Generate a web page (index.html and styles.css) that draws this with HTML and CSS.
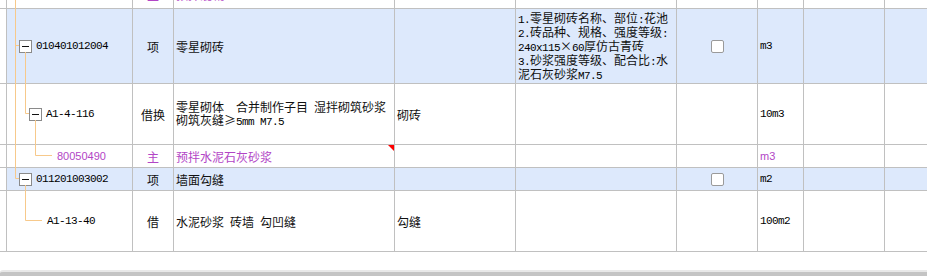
FILE: index.html
```html
<!DOCTYPE html>
<html lang="zh-CN">
<head>
  <meta charset="UTF-8">
  <title>清单定额</title>
  <link rel="stylesheet" href="styles.css">
</head>
<body>
  <div class="sheet">
    <div class="row short cut">
      <div class="cell edge"></div>
      <div class="cell tree leaf3"><span class="sans main">80050489</span></div>
      <div class="cell kind main">主</div>
      <div class="cell main">预拌混凝土</div>
      <div class="cell"></div>
      <div class="cell"></div>
      <div class="cell"></div>
      <div class="cell"><span class="sans main">m3</span></div>
      <div class="cell"></div>
      <div class="cell last"></div>
    </div>

    <div class="row tall hl">
      <div class="cell edge"></div>
      <div class="cell tree"><span class="tog"></span><span class="en code">010401012004</span></div>
      <div class="cell kind">项</div>
      <div class="cell">零星砌砖</div>
      <div class="cell"></div>
      <div class="cell">
        <div class="lines">
          <div><span class="en">1.</span>零星砌砖名称、部位<span class="en">:</span>花池</div>
          <div><span class="en">2.</span>砖品种、规格、强度等级<span class="en">:</span></div>
          <div><span class="en">240x115</span>×<span class="en">60</span>厚仿古青砖</div>
          <div><span class="en">3.</span>砂浆强度等级、配合比<span class="en">:</span>水</div>
          <div>泥石灰砂浆<span class="en">M7.5</span></div>
        </div>
      </div>
      <div class="cell pick"><span class="check"></span></div>
      <div class="cell"><span class="en">m3</span></div>
      <div class="cell"></div>
      <div class="cell last"></div>
    </div>

    <div class="row">
      <div class="cell edge"></div>
      <div class="cell tree lv2"><span class="tog"></span><span class="en code">A1-4-116</span></div>
      <div class="cell kind">借换</div>
      <div class="cell">
        <div class="lines two">
          <div>零星砌体&ensp;&ensp;合并制作子目&ensp;湿拌砌筑砂浆</div>
          <div>砌筑灰缝≥<span class="en">5mm M7.5</span></div>
        </div>
      </div>
      <div class="cell">砌砖</div>
      <div class="cell"></div>
      <div class="cell"></div>
      <div class="cell"><span class="en">10m3</span></div>
      <div class="cell"></div>
      <div class="cell last"></div>
    </div>

    <div class="row short">
      <div class="cell edge"></div>
      <div class="cell tree leaf3"><span class="sans main">80050490</span></div>
      <div class="cell kind main">主</div>
      <div class="cell main flag">预拌水泥石灰砂浆</div>
      <div class="cell"></div>
      <div class="cell"></div>
      <div class="cell"></div>
      <div class="cell"><span class="sans main">m3</span></div>
      <div class="cell"></div>
      <div class="cell last"></div>
    </div>

    <div class="row short hl">
      <div class="cell edge"></div>
      <div class="cell tree"><span class="tog"></span><span class="en code">011201003002</span></div>
      <div class="cell kind">项</div>
      <div class="cell">墙面勾缝</div>
      <div class="cell"></div>
      <div class="cell"></div>
      <div class="cell pick"><span class="check"></span></div>
      <div class="cell"><span class="en">m2</span></div>
      <div class="cell"></div>
      <div class="cell last"></div>
    </div>

    <div class="row">
      <div class="cell edge"></div>
      <div class="cell tree leaf2"><span class="en">A1-13-40</span></div>
      <div class="cell kind">借</div>
      <div class="cell">水泥砂浆&ensp;砖墙&ensp;勾凹缝</div>
      <div class="cell">勾缝</div>
      <div class="cell"></div>
      <div class="cell"></div>
      <div class="cell"><span class="en">100m2</span></div>
      <div class="cell"></div>
      <div class="cell last"></div>
    </div>
  </div>

  <svg class="links" width="60" height="252" viewBox="0 0 60 252">
    <path d="M15.5 0V178.5H19M15.5 45.5H19M25.5 52V113.5H29M35.5 120V155.5H52M25.5 185V220.5H42" fill="none" stroke="#f7c98b" stroke-width="1"/>
  </svg>

  <div class="hscroll"></div>
</body>
</html>
```

FILE: styles.css
```css
body {
  margin: 0;
  height: 276px;
  overflow: hidden;
  position: relative;
  background: #fff;
  color: #111;
  font-family: "Noto Sans CJK SC", "Liberation Sans", sans-serif;
  font-size: 12px;
}
.sheet {
  margin-top: -14px;
}
.row {
  display: grid;
  grid-template-columns: 7px 126px 41px 221px 121px 161px 81px 46px 81px 1fr;
  height: 61px;
}
.row.short {
  height: 23px;
}
.row.tall {
  height: 75px;
}
.row.hl {
  background: #dde9fc;
}
.row.cut .cell {
  padding-bottom: 6px;
}
.cell {
  box-sizing: border-box;
  border-right: 1px solid #c0c0c0;
  border-bottom: 1px solid #c0c0c0;
  display: flex;
  align-items: center;
  padding: 0 2px;
  white-space: nowrap;
  overflow: hidden;
  position: relative;
}
.cell.edge {
  background: #fff;
  padding: 0;
}
.cell.last {
  border-right: none;
}
.kind {
  justify-content: center;
}
.pick {
  justify-content: center;
  padding: 0;
}
.main {
  color: #b245c6;
}
.tree {
  padding-left: 12px;
}
.tree.lv2 {
  padding-left: 22px;
}
.tree.leaf2 {
  padding-left: 40px;
}
.tree.leaf3 {
  padding-left: 50px;
}
.tog {
  box-sizing: border-box;
  width: 13px;
  height: 13px;
  border: 1px solid #8a8a8a;
  background: #fff;
  display: flex;
  align-items: center;
  justify-content: center;
  flex: none;
}
.tog::before {
  content: "";
  width: 7px;
  height: 1px;
  background: #111;
}
.code {
  margin-left: 4px;
}
.en {
  font-family: "Liberation Mono", monospace;
  font-size: 11px;
  letter-spacing: -0.6px;
  line-height: 1;
  color: #000;
}
.sans {
  font-family: "Liberation Sans", sans-serif;
  font-size: 11px;
  line-height: 1;
}
.lines div {
  height: 14px;
  line-height: 14px;
  overflow: visible;
}
.lines.two {
  margin-top: -2px;
}
.lines.two div {
  height: 13px;
  line-height: 13px;
}
.check {
  box-sizing: border-box;
  width: 13px;
  height: 13px;
  border: 1px solid #9a9a9a;
  border-radius: 2px;
  background: #fff;
}
.flag::after {
  content: "";
  position: absolute;
  top: 0;
  right: 0;
  border-top: 6px solid #f00;
  border-left: 6px solid transparent;
}
.links {
  position: absolute;
  top: 0;
  left: 0;
  pointer-events: none;
}
.hscroll {
  margin-top: 18px;
  height: 4px;
  border-top: 2px solid #e8e8e8;
  border-top-left-radius: 3px;
  background: #c4c4c4;
}
```
